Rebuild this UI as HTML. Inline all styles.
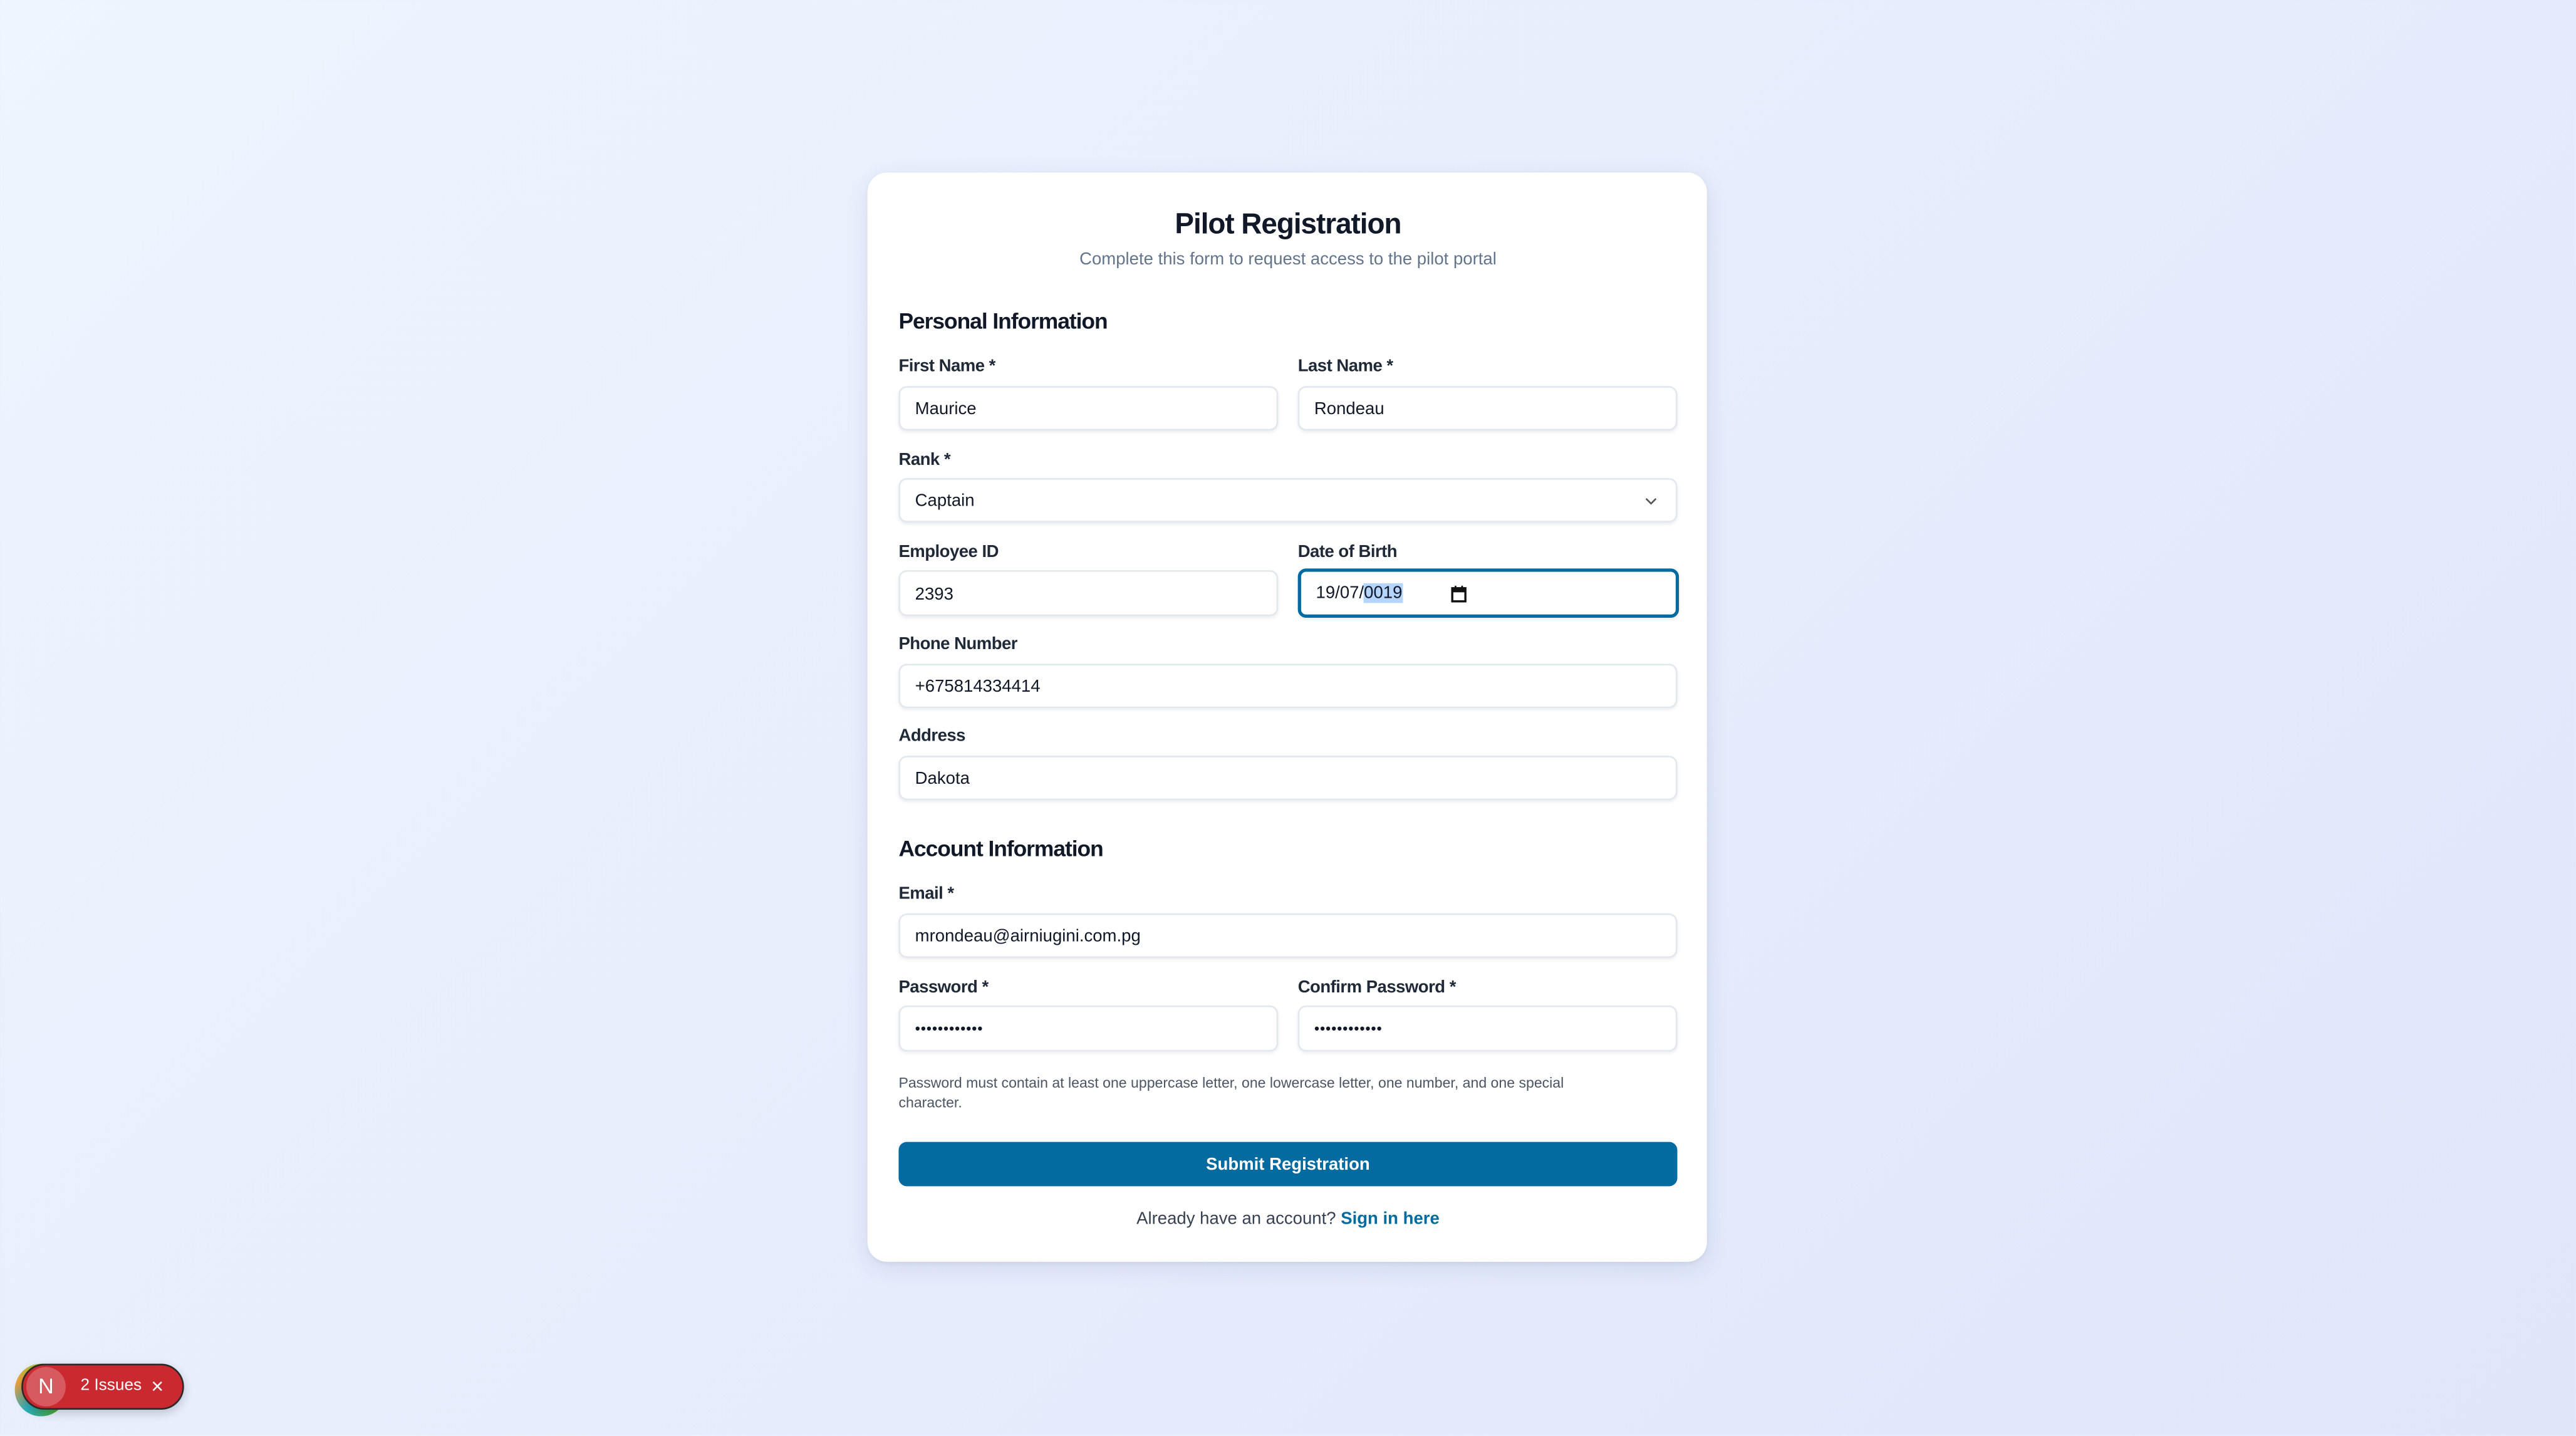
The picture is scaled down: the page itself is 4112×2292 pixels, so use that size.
<!DOCTYPE html>
<html><head><meta charset="utf-8"><style>
*{box-sizing:border-box;margin:0;padding:0}
html,body{width:4112px;height:2290px;overflow:hidden}
body{background:linear-gradient(135deg,#eff5fe 0%,#e6edfc 50%,#dfe6fa 100%);font-family:"Liberation Sans",sans-serif;}
#w{position:absolute;left:0;top:0;width:1568px;height:874px;transform:scale(2.6224);transform-origin:0 0}
.card{position:absolute;left:528px;top:105px;width:511px;height:663px;background:#fff;border-radius:12px;box-shadow:0 4px 14px rgba(30,50,120,.10),0 1px 3px rgba(0,0,0,.06)}
.a{position:absolute;white-space:nowrap}
h1{position:absolute;left:0;right:0;top:126px;text-align:center;font-size:17.5px;font-weight:bold;color:#111827;letter-spacing:-.4px}
.sub{left:0;right:0;top:152px;text-align:center;font-size:10.5px;color:#64748b}
.sec{font-size:13.5px;font-weight:bold;color:#111827;letter-spacing:-.4px}
.lab{font-size:10.5px;color:#1f2937;font-weight:bold;letter-spacing:-.2px}
.in{position:absolute;background:#fff;border:1px solid #e2e8f0;border-radius:5px;box-shadow:0 1px 2px rgba(0,0,0,.08);font-size:10.5px;color:#111827;padding-left:9px;display:flex;align-items:center}
</style></head><body><div id="w">
<div class="card"></div>
<h1>Pilot Registration</h1>
<div class="a sub">Complete this form to request access to the pilot portal</div>
<div class="a sec" style="left:547px;top:188px">Personal Information</div>
<div class="a lab" style="left:547px;top:217px">First Name *</div>
<div class="a lab" style="left:790px;top:217px">Last Name *</div>
<div class="in" style="left:547px;top:235px;width:231px;height:27px">Maurice</div>
<div class="in" style="left:790px;top:235px;width:231px;height:27px">Rondeau</div>
<div class="a lab" style="left:547px;top:274px">Rank *</div>
<div class="in" style="left:547px;top:291px;width:474px;height:27px">Captain<svg style="position:absolute;right:11px;top:10px" width="8" height="6" viewBox="0 0 8 6"><path d="M1 1.5L4 4.5L7 1.5" fill="none" stroke="#555" stroke-width="1"/></svg></div>
<div class="a lab" style="left:547px;top:330px">Employee ID</div>
<div class="a lab" style="left:790px;top:330px">Date of Birth</div>
<div class="in" style="left:547px;top:347px;width:231px;height:28px;padding-top:2px">2393</div>
<div class="in" style="left:790px;top:346px;width:232px;height:30px;border:2px solid #046ba1;padding-left:9px">19/07/<span style="background:#b4d5fe">0019</span><svg style="position:absolute;left:91px;top:8px" width="10" height="11" viewBox="0 0 10 11"><rect x="1" y="2" width="8" height="8" fill="none" stroke="#111" stroke-width="1.3"/><rect x="1" y="2" width="8" height="2.5" fill="#111"/><path d="M3 .5v2M7 .5v2" stroke="#111"/></svg></div>
<div class="a lab" style="left:547px;top:386px">Phone Number</div>
<div class="in" style="left:547px;top:404px;width:474px;height:27px">+675814334414</div>
<div class="a lab" style="left:547px;top:442px">Address</div>
<div class="in" style="left:547px;top:460px;width:474px;height:27px">Dakota</div>
<div class="a sec" style="left:547px;top:509px">Account Information</div>
<div class="a lab" style="left:547px;top:538px">Email *</div>
<div class="in" style="left:547px;top:556px;width:474px;height:27px">mrondeau@airniugini.com.pg</div>
<div class="a lab" style="left:547px;top:595px">Password *</div>
<div class="a lab" style="left:790px;top:595px">Confirm Password *</div>
<div class="in" style="left:547px;top:612px;width:231px;height:28px;font-size:9px;letter-spacing:.3px">••••••••••••</div>
<div class="in" style="left:790px;top:612px;width:231px;height:28px;font-size:9px;letter-spacing:.3px">••••••••••••</div>
<div class="a" style="left:547px;top:653px;font-size:8.8px;color:#4b5563;line-height:12px">Password must contain at least one uppercase letter, one lowercase letter, one number, and one special<br>character.</div>
<div class="a" style="left:547px;top:695px;width:474px;height:27px;background:#046ba1;border-radius:5px;color:#fff;font-size:10.5px;font-weight:bold;display:flex;align-items:center;justify-content:center">Submit Registration</div>
<div class="a" style="left:0;width:1568px;top:736px;text-align:center;font-size:10.5px;color:#374151">Already have an account? <span style="color:#046ba1;font-weight:bold">Sign in here</span></div>
<div class="a" style="left:9px;top:830px;width:32px;height:32px;border-radius:50%;background:conic-gradient(#9ccc3a,#c8d820,#4aaa3a,#2bb0c0,#f0a040,#9ccc3a)"></div>
<div class="a" style="left:13px;top:830px;width:99px;height:28px;border-radius:14px;background:#c9292f;border:1px solid #2a2a2a;box-shadow:0 2px 6px rgba(0,0,0,.2)"></div>
<div class="a" style="left:16px;top:832px;width:24px;height:24px;border-radius:50%;background:#d65a5f;color:#fff;font-size:13px;text-align:center;line-height:24px">N</div>
<div class="a" style="left:49px;top:838px;color:#fff;font-size:10px;line-height:12px">2 Issues</div>
<div class="a" style="left:92px;top:836px;color:#fff;font-size:13px;line-height:15px">×</div>
</div></body></html>
